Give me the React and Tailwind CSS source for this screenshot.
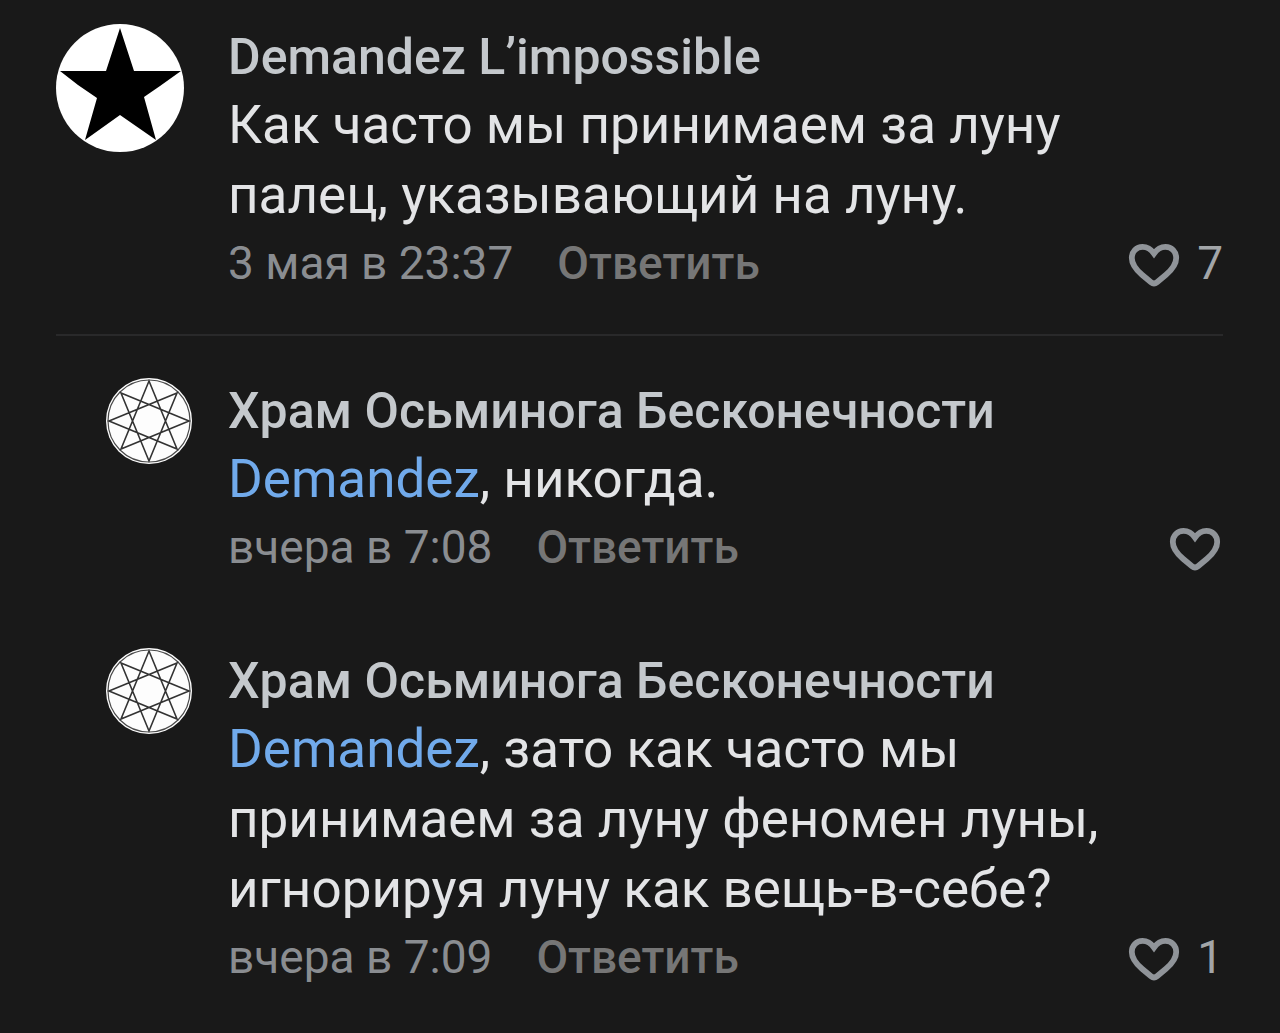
import React from 'react';

const StarAvatar = () => (
  <svg viewBox="0 0 128 128" className="size-32 shrink-0" aria-hidden="true">
    <circle cx="64" cy="64" r="64" fill="#fff" />
    <path d="M64 4 L78 47 L125 47 L104 62 L88 73 L100 116 L64 91 L29 116 L41 74 L22 61 L4 47 L50 47 Z" fill="#000" />
  </svg>
);

const OctagramAvatar = () => (
  <svg viewBox="0 0 86 86" className="size-[86px] shrink-0" aria-hidden="true">
    <circle cx="43" cy="43" r="43" fill="#fdfdfd" />
    <circle cx="43" cy="43" r="41" fill="none" stroke="#4a4a4a" strokeWidth="1.2" />
    <path
      d="M43 3 L71 71 L3 43 L71 15 L43 83 L15 15 L83 43 L15 71 Z"
      fill="none"
      stroke="#333"
      strokeWidth="1.6"
    />
  </svg>
);

const HeartIcon = () => (
  <svg viewBox="0 -2 56 56" className="size-14" fill="none" stroke="#909499" strokeWidth="5.8" aria-hidden="true">
    <path d="M28 16.5 C24.5 11.5 20.5 9.8 16.5 9.8 C10.5 9.8 5.8 14.5 5.8 21 C5.8 28.5 11 33.5 16 37.8 L25 45.3 C27 47 29 47 31 45.3 L40 37.8 C45 33.5 50.2 28.5 50.2 21 C50.2 14.5 45.5 9.8 39.5 9.8 C35.5 9.8 31.5 11.5 28 16.5 Z" />
  </svg>
);

const Comment = ({ author, mention, text, date, likes, isReply }) => (
  <article className={isReply ? 'flex gap-9 pl-[50px]' : 'flex gap-11'}>
    {isReply ? <OctagramAvatar /> : <StarAvatar />}
    <div className="min-w-0 grow">
      <h3 className="text-[50px] leading-[66px] font-medium text-[#c4c8cc]">{author}</h3>
      <p className="text-[53px] leading-[70px] text-[#e3e4e6]">
        {mention && <a href="#" className="text-[#71aaeb]">{mention}</a>}
        {text}
      </p>
      <footer className="flex items-center text-[46px] leading-[66px]">
        <time className="text-[#8a8d91]">{date}</time>
        <button type="button" className="ml-11 font-medium text-[#767676]">Ответить</button>
        <button type="button" aria-label="Нравится" className="ml-auto flex items-center gap-[15px] text-[#a2a5a8]">
          <HeartIcon />
          {likes > 0 && <span>{likes}</span>}
        </button>
      </footer>
    </div>
  </article>
);

const comment = {
  author: 'Demandez L’impossible',
  text: 'Как часто мы принимаем за луну палец, указывающий на луну.',
  date: '3 мая в 23:37',
  likes: 7,
};

const replies = [
  {
    id: 1,
    author: 'Храм Осьминога Бесконечности',
    mention: 'Demandez',
    text: ', никогда.',
    date: 'вчера в 7:08',
    likes: 0,
  },
  {
    id: 2,
    author: 'Храм Осьминога Бесконечности',
    mention: 'Demandez',
    text: ', зато как часто мы принимаем за луну феномен луны, игнорируя луну как вещь-в-себе?',
    date: 'вчера в 7:09',
    likes: 1,
  },
];

export default function App() {
  return (
    <main className="min-h-screen bg-[#191919] pt-6 pr-[57px] pb-6 pl-14 font-['Roboto','Noto_Sans',sans-serif]">
      <Comment {...comment} />
      <hr className="mt-[38px] mb-[42px] border-t-2 border-[#29292a]" />
      <section className="flex flex-col gap-[68px]">
        {replies.map((reply) => (
          <Comment key={reply.id} {...reply} isReply />
        ))}
      </section>
    </main>
  );
}
